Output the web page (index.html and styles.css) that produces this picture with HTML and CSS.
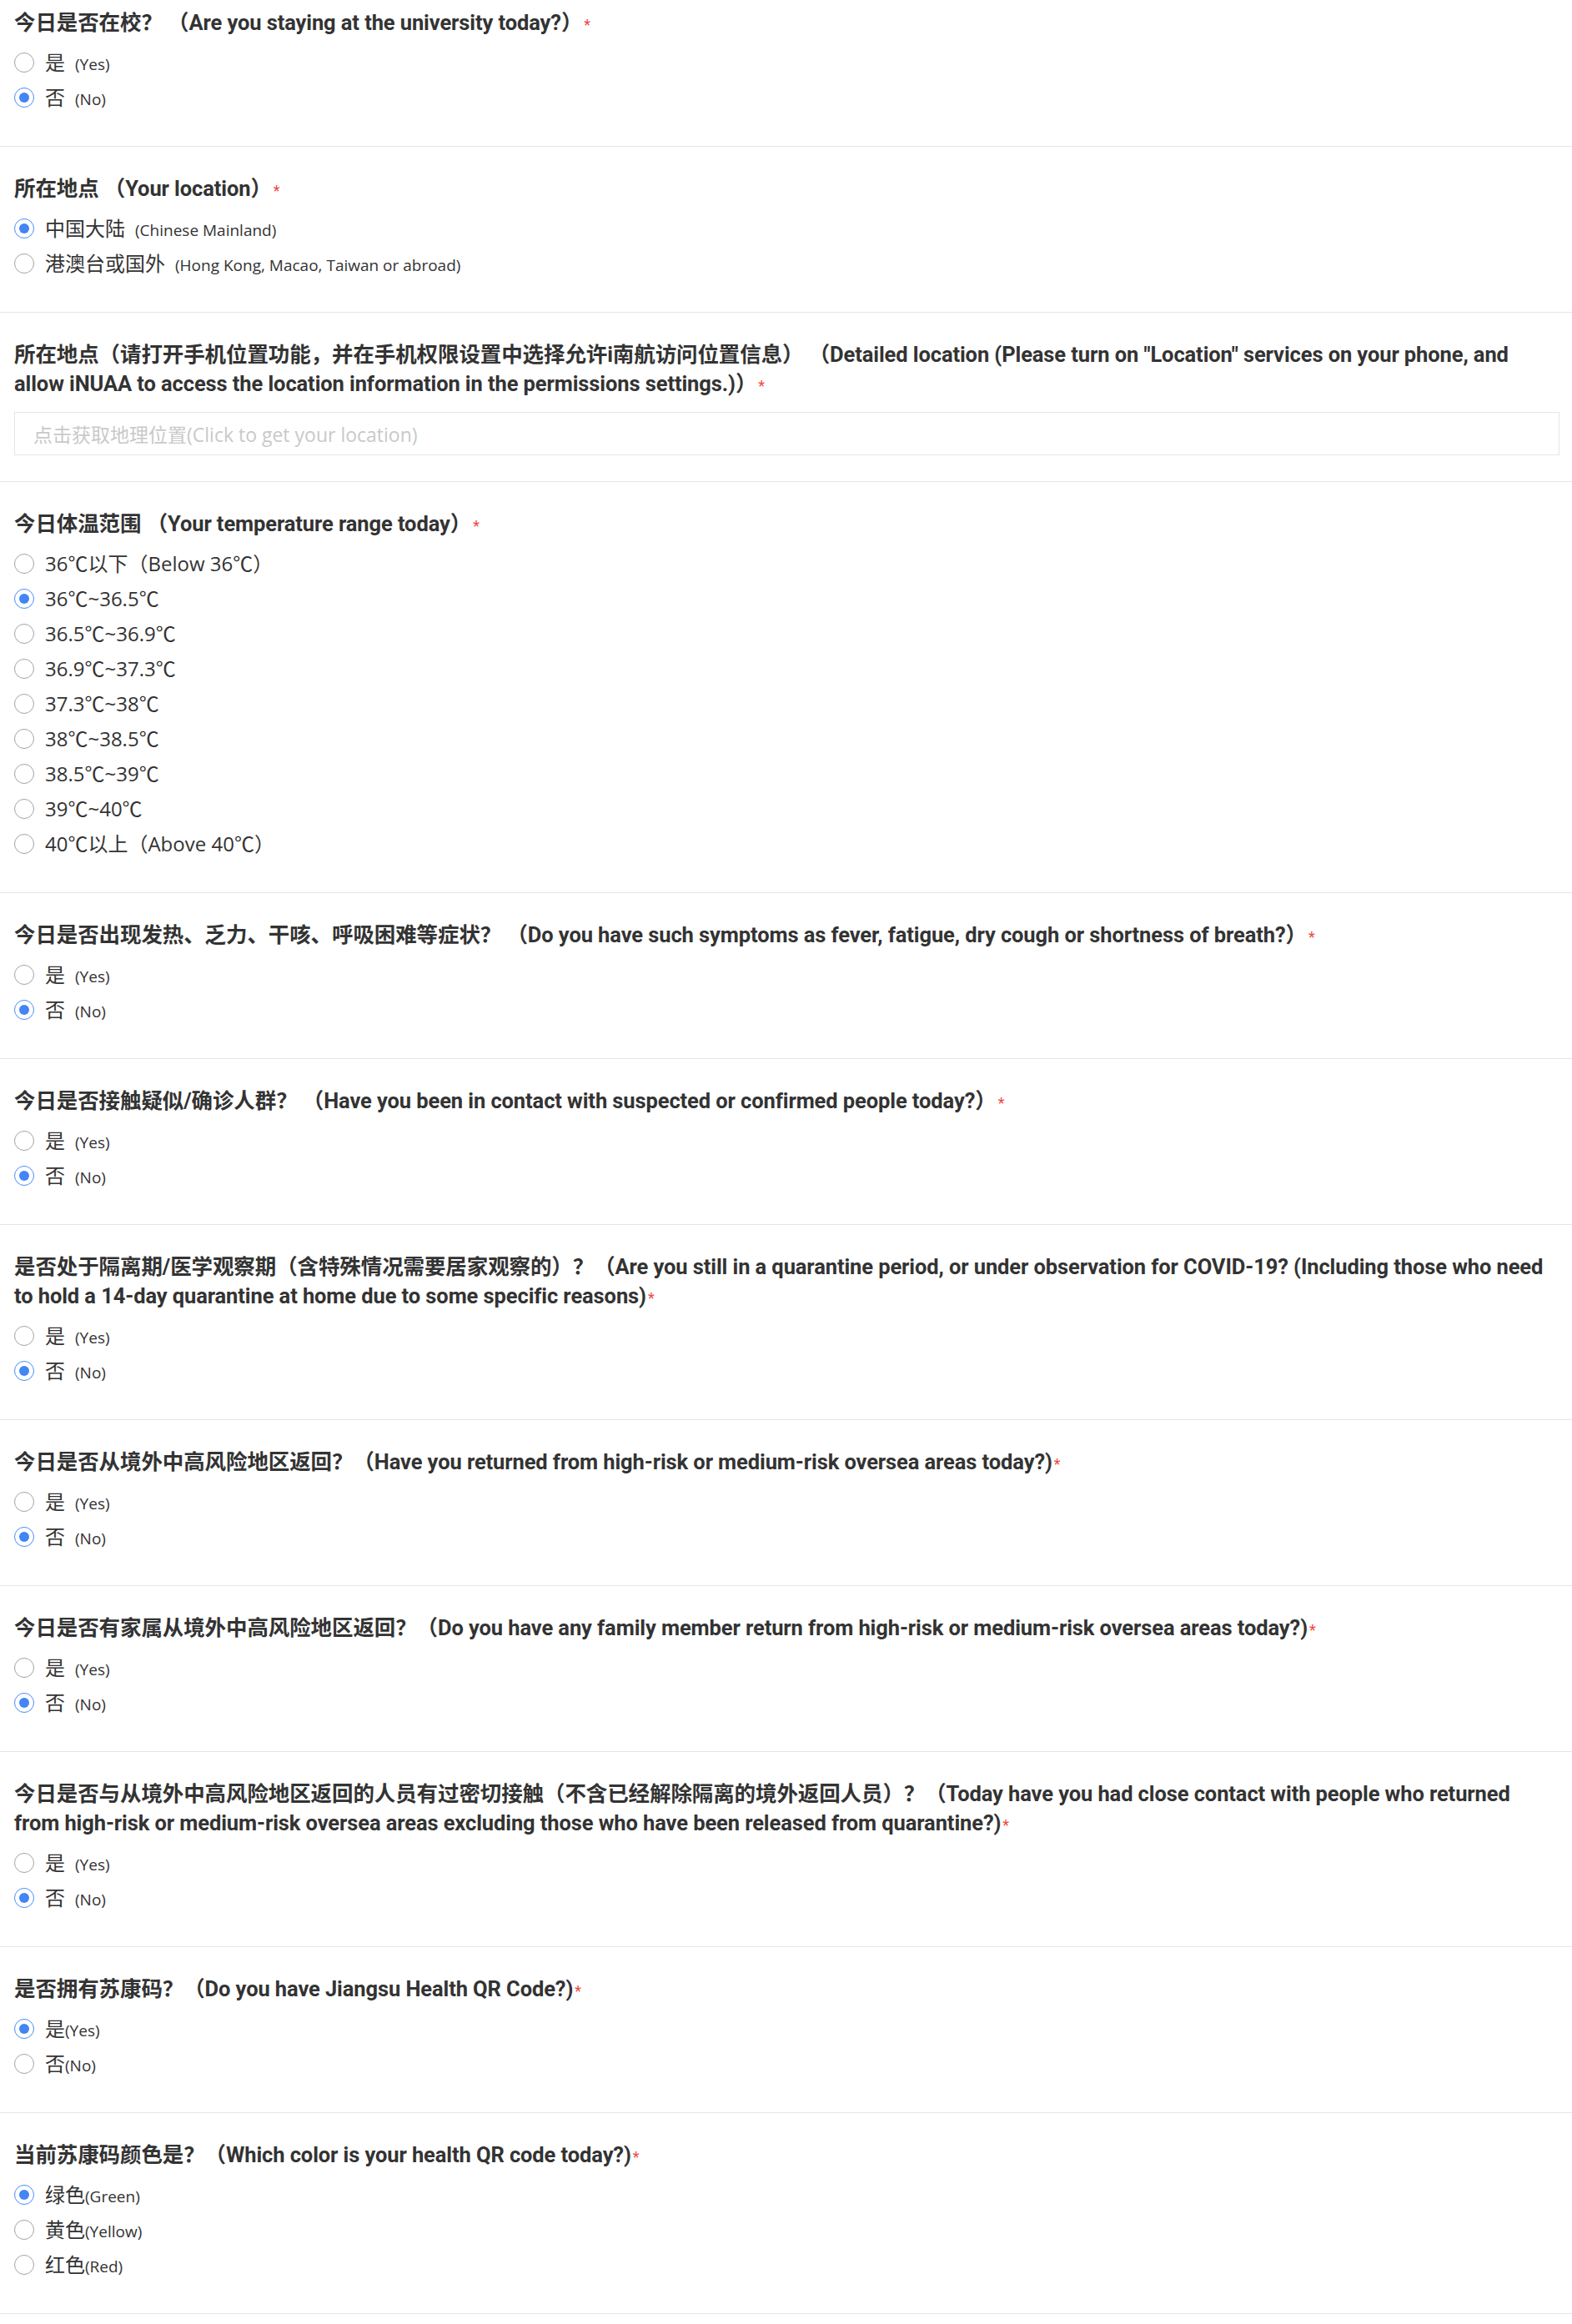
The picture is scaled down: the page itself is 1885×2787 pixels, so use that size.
FILE: index.html
```html
<!DOCTYPE html>
<html lang="zh-CN">
<head>
<meta charset="utf-8">
<title>每日健康打卡</title>
<link rel="stylesheet" href="styles.css">
</head>
<body>
<div class="form">

  <section class="item first">
    <div class="q">今日是否在校？ （Are you staying at the university today?）<span class="req">*</span></div>
    <div class="opts">
      <div class="opt"><span class="radio"></span><span class="lbl">是<span class="en">(Yes)</span></span></div>
      <div class="opt"><span class="radio on"></span><span class="lbl">否<span class="en">(No)</span></span></div>
    </div>
  </section>

  <section class="item">
    <div class="q">所在地点 （Your location）<span class="req">*</span></div>
    <div class="opts">
      <div class="opt"><span class="radio on"></span><span class="lbl">中国大陆<span class="en">(Chinese Mainland)</span></span></div>
      <div class="opt"><span class="radio"></span><span class="lbl">港澳台或国外<span class="en">(Hong Kong, Macao, Taiwan or abroad)</span></span></div>
    </div>
  </section>

  <section class="item loc">
    <div class="q">所在地点（请打开手机位置功能，并在手机权限设置中选择允许i南航访问位置信息） （Detailed location (Please turn on "Location" services on your phone, and<br>allow iNUAA to access the location information in the permissions settings.)）<span class="req">*</span></div>
    <div class="loc-input">点击获取地理位置(Click to get your location)</div>
  </section>

  <section class="item">
    <div class="q">今日体温范围 （Your temperature range today）<span class="req">*</span></div>
    <div class="opts">
      <div class="opt"><span class="radio"></span><span class="lbl">36℃以下（Below 36℃）</span></div>
      <div class="opt"><span class="radio on"></span><span class="lbl">36℃~36.5℃</span></div>
      <div class="opt"><span class="radio"></span><span class="lbl">36.5℃~36.9℃</span></div>
      <div class="opt"><span class="radio"></span><span class="lbl">36.9℃~37.3℃</span></div>
      <div class="opt"><span class="radio"></span><span class="lbl">37.3℃~38℃</span></div>
      <div class="opt"><span class="radio"></span><span class="lbl">38℃~38.5℃</span></div>
      <div class="opt"><span class="radio"></span><span class="lbl">38.5℃~39℃</span></div>
      <div class="opt"><span class="radio"></span><span class="lbl">39℃~40℃</span></div>
      <div class="opt"><span class="radio"></span><span class="lbl">40℃以上（Above 40℃）</span></div>
    </div>
  </section>

  <section class="item">
    <div class="q">今日是否出现发热、乏力、干咳、呼吸困难等症状？ （Do you have such symptoms as fever, fatigue, dry cough or shortness of breath?）<span class="req">*</span></div>
    <div class="opts">
      <div class="opt"><span class="radio"></span><span class="lbl">是<span class="en">(Yes)</span></span></div>
      <div class="opt"><span class="radio on"></span><span class="lbl">否<span class="en">(No)</span></span></div>
    </div>
  </section>

  <section class="item">
    <div class="q">今日是否接触疑似/确诊人群？ （Have you been in contact with suspected or confirmed people today?）<span class="req">*</span></div>
    <div class="opts">
      <div class="opt"><span class="radio"></span><span class="lbl">是<span class="en">(Yes)</span></span></div>
      <div class="opt"><span class="radio on"></span><span class="lbl">否<span class="en">(No)</span></span></div>
    </div>
  </section>

  <section class="item">
    <div class="q">是否处于隔离期/医学观察期（含特殊情况需要居家观察的）？（Are you still in a quarantine period, or under observation for COVID-19? (Including those who need<br>to hold a 14-day quarantine at home due to some specific reasons)<span class="req">*</span></div>
    <div class="opts">
      <div class="opt"><span class="radio"></span><span class="lbl">是<span class="en">(Yes)</span></span></div>
      <div class="opt"><span class="radio on"></span><span class="lbl">否<span class="en">(No)</span></span></div>
    </div>
  </section>

  <section class="item">
    <div class="q">今日是否从境外中高风险地区返回？（Have you returned from high-risk or medium-risk oversea areas today?)<span class="req">*</span></div>
    <div class="opts">
      <div class="opt"><span class="radio"></span><span class="lbl">是<span class="en">(Yes)</span></span></div>
      <div class="opt"><span class="radio on"></span><span class="lbl">否<span class="en">(No)</span></span></div>
    </div>
  </section>

  <section class="item">
    <div class="q">今日是否有家属从境外中高风险地区返回？（Do you have any family member return from high-risk or medium-risk oversea areas today?)<span class="req">*</span></div>
    <div class="opts">
      <div class="opt"><span class="radio"></span><span class="lbl">是<span class="en">(Yes)</span></span></div>
      <div class="opt"><span class="radio on"></span><span class="lbl">否<span class="en">(No)</span></span></div>
    </div>
  </section>

  <section class="item">
    <div class="q">今日是否与从境外中高风险地区返回的人员有过密切接触（不含已经解除隔离的境外返回人员）？（Today have you had close contact with people who returned<br>from high-risk or medium-risk oversea areas excluding those who have been released from quarantine?)<span class="req">*</span></div>
    <div class="opts">
      <div class="opt"><span class="radio"></span><span class="lbl">是<span class="en">(Yes)</span></span></div>
      <div class="opt"><span class="radio on"></span><span class="lbl">否<span class="en">(No)</span></span></div>
    </div>
  </section>

  <section class="item">
    <div class="q">是否拥有苏康码？（Do you have Jiangsu Health QR Code?)<span class="req">*</span></div>
    <div class="opts">
      <div class="opt"><span class="radio on"></span><span class="lbl">是<span class="en tight">(Yes)</span></span></div>
      <div class="opt"><span class="radio"></span><span class="lbl">否<span class="en tight">(No)</span></span></div>
    </div>
  </section>

  <section class="item">
    <div class="q">当前苏康码颜色是？（Which color is your health QR code today?)<span class="req">*</span></div>
    <div class="opts">
      <div class="opt"><span class="radio on"></span><span class="lbl">绿色<span class="en tight">(Green)</span></span></div>
      <div class="opt"><span class="radio"></span><span class="lbl">黄色<span class="en tight">(Yellow)</span></span></div>
      <div class="opt"><span class="radio"></span><span class="lbl">红色<span class="en tight">(Red)</span></span></div>
    </div>
  </section>

</div>
</body>
</html>
```

FILE: styles.css
```css
html, body {
  margin: 0;
  padding: 0;
  background: #ffffff;
}

body {
  color: #333333;
  font-family: Roboto, "Noto Sans CJK SC", sans-serif;
}

.form {
  display: flex;
  flex-direction: column;
}

.item {
  padding: 33px 15px 37px 17px;
  border-bottom: 1px solid #e6e6e6;
}

.item.first {
  padding-top: 10px;
  padding-bottom: 37px;
}

.item.loc {
  padding-bottom: 31px;
}

.q {
  font-size: 25.5px;
  font-weight: 700;
  line-height: 35px;
  letter-spacing: -0.1px;
  color: #333333;
}

.req {
  color: #f0473c;
  font-size: 18px;
  font-weight: 400;
  line-height: 0;
  margin-left: 2px;
}

.opts {
  margin-top: 9px;
  display: flex;
  flex-direction: column;
}

.opt {
  display: flex;
  align-items: center;
  height: 42px;
  font-family: "Open Sans", "Noto Sans CJK SC", sans-serif;
  font-size: 24px;
  color: #333333;
}

.radio {
  flex: none;
  position: relative;
  width: 24px;
  height: 24px;
  box-sizing: border-box;
  border: 1px solid #a3a3a3;
  border-radius: 50%;
  margin-right: 13px;
  background: #ffffff;
}

.radio.on {
  border-color: #4a8cf6;
}

.radio.on::after {
  content: "";
  position: absolute;
  left: 50%;
  top: 50%;
  width: 12px;
  height: 12px;
  margin: -6px 0 0 -6px;
  border-radius: 50%;
  background: #4285f4;
}

.lbl {
  line-height: 1;
}

.en {
  font-size: 19px;
  margin-left: 12px;
}

.en.tight {
  font-size: 19px;
  margin-left: 0;
}

.loc-input {
  margin-top: 16px;
  height: 52px;
  box-sizing: border-box;
  border: 1px solid #e6e6e6;
  display: flex;
  align-items: center;
  padding-left: 22px;
  font-family: "Open Sans", "Noto Sans CJK SC", sans-serif;
  font-size: 23px;
  color: #c9c9c9;
}
```
